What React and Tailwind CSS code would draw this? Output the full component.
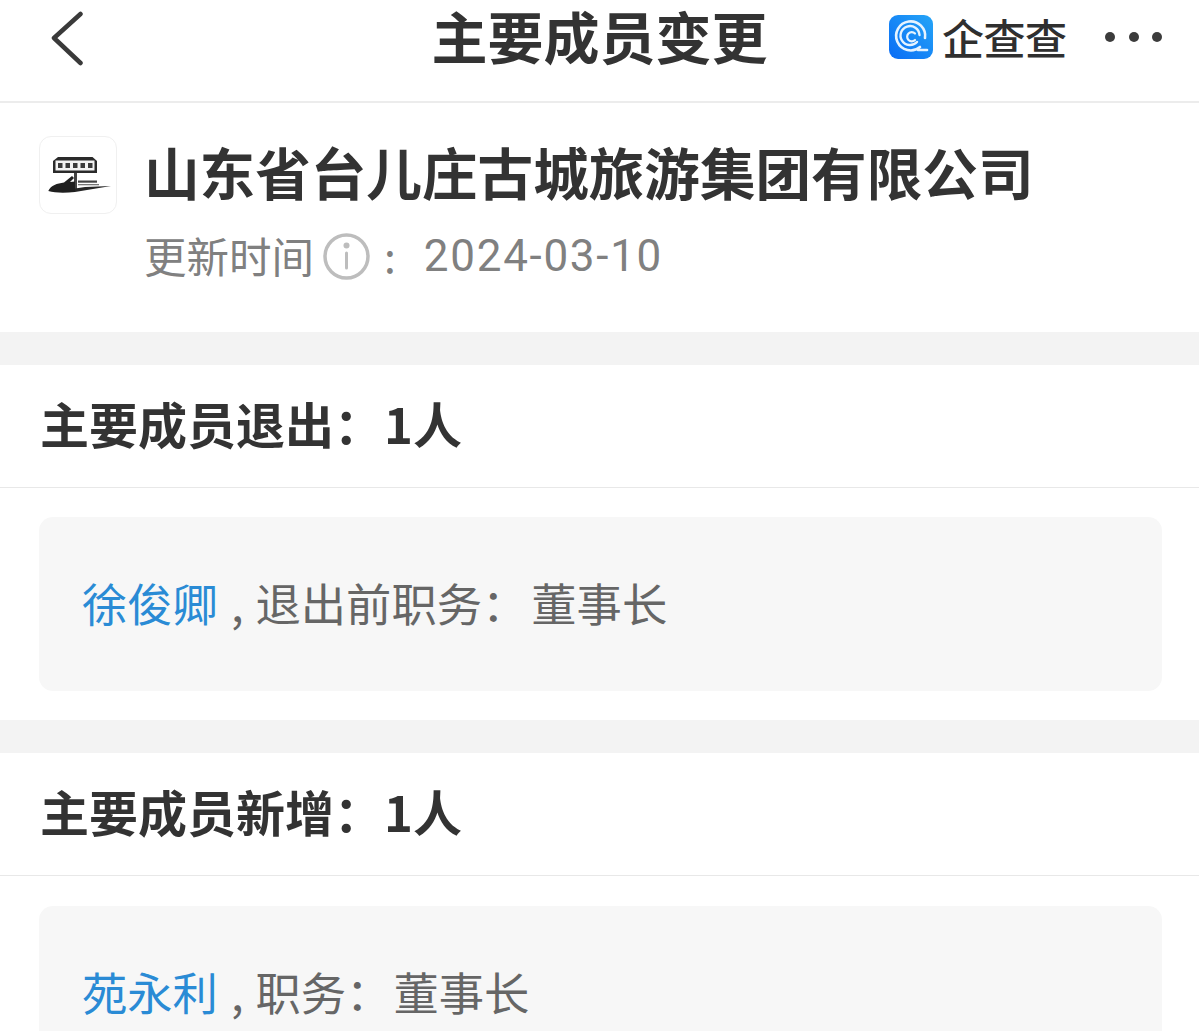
const font = { fontFamily: '"Noto Sans CJK SC", "Noto Sans", sans-serif' };
const latin = { fontFamily: 'Roboto, "Noto Sans CJK SC", sans-serif' };

function Section({ title, name, label, value, gap, last }) {
  return (
    <section className="bg-white">
      <div className="h-[123px] flex items-center px-[40px] pb-[7px] border-b border-[#e8e8e8]">
        <h2 className="text-[49px] font-bold text-[#333333] leading-[70px] whitespace-nowrap">
          {title}：<span className="ml-[1px]">1人</span>
        </h2>
      </div>
      <div className={last ? "pt-[30px] px-[37px] pl-[39px]" : "pt-[29px] pb-[29px] px-[37px] pl-[39px]"}>
        <div className="h-[174px] bg-[#f7f7f7] rounded-[14px] px-[43px] pb-[5px] flex items-center text-[45.3px] leading-[60px] text-[#666666] whitespace-nowrap">
          <span className="text-[#2a8bd5]">{name}</span>
          <span className="ml-[13px]">,</span>
          <span className="ml-[12px]">{label}：</span>
          <span style={{ marginLeft: gap }}>{value}</span>
        </div>
      </div>
    </section>
  );
}

export default function App() {
  return (
    <div style={font} className="h-[1031px] w-[1199px] overflow-hidden bg-[#f3f3f3]">
      <header className="relative h-[103px] pb-[32px] bg-white border-b-2 border-[#ececec] flex items-center justify-center">
        <svg className="absolute left-[50px] top-[11px]" width="36" height="56" viewBox="0 0 36 56" fill="none">
          <path d="M30.5 3 L4 27 L30.5 52" stroke="#3a3a3a" strokeWidth="4.5" strokeLinecap="round" strokeLinejoin="round" />
        </svg>
        <h1 className="text-[56px] font-bold text-[#333333] leading-[69px] whitespace-nowrap">主要成员变更</h1>
        <div className="absolute left-[889px] top-[15px] flex items-center">
          <svg width="44" height="44" viewBox="0 0 44 44">
            <defs>
              <linearGradient id="q" x1="0" y1="1" x2="1" y2="0">
                <stop offset="0" stopColor="#0a6cf5" />
                <stop offset="1" stopColor="#25a5f7" />
              </linearGradient>
            </defs>
            <rect width="44" height="44" rx="9" fill="url(#q)" />
            <g fill="none" stroke="#e6f3ff" strokeLinecap="round">
              <path d="M31 32 A14.5 14.5 0 1 1 36 23" strokeWidth="2.6" />
              <path d="M28 27 A9.5 9.5 0 1 1 30.5 20" strokeWidth="2.4" />
              <path d="M26 25 A4.6 4.6 0 1 1 26 18.5" strokeWidth="2.2" />
              <path d="M29 35 H38" strokeWidth="2.6" />
            </g>
          </svg>
          <span className="ml-[9px] text-[42px] leading-[44px] font-medium tracking-[-0.5px] text-[#2f2f2f] whitespace-nowrap">企查查</span>
        </div>
        <div className="absolute left-[1105px] top-[32px] flex gap-[13.5px]">
          <span className="w-[10px] h-[10px] rounded-full bg-[#3c3c3c]" />
          <span className="w-[10px] h-[10px] rounded-full bg-[#3c3c3c]" />
          <span className="w-[10px] h-[10px] rounded-full bg-[#3c3c3c]" />
        </div>
      </header>

      <section className="h-[229px] bg-white px-[39px] pt-[33px] flex items-start">
        <div className="w-[78px] h-[78px] shrink-0 rounded-[12px] border border-[#f0f0f0] bg-white">
          <svg width="76" height="76" viewBox="1 1 76 76">
            <path d="M14 25 L19 21 H53.5 L58 25 V37 H14 Z" fill="#2a2a2a" />
            <rect x="16.5" y="24.5" width="39" height="10" fill="#f2f2f2" />
            <g fill="#3a3a3a">
              <rect x="19" y="27" width="4.5" height="5" />
              <rect x="26.5" y="27" width="4.5" height="5" />
              <rect x="34" y="27" width="4.5" height="5" />
              <rect x="41.5" y="27" width="4.5" height="5" />
              <rect x="49" y="27" width="4.5" height="5" />
            </g>
            <rect x="35" y="37" width="3" height="17" fill="#444" />
            <path d="M9.3 55 C12 49 18 47.5 25 46.5 L33 40 L35 42 L31 46 L36 45.5 V56 C26 57 16 57 9.3 55 Z" fill="#1f1f1f" />
            <path d="M36 56 L72 50 L46 51 L36 52.5 Z" fill="#262626" />
            <rect x="39" y="44.5" width="19" height="2.2" fill="#444" />
            <rect x="39" y="48" width="21" height="1.3" fill="#777" />
          </svg>
        </div>
        <div className="ml-[27px] -mt-[3px]">
          <div className="text-[55.6px] font-bold text-[#333333] leading-[76px] whitespace-nowrap">山东省台儿庄古城旅游集团有限公司</div>
          <div className="mt-[16px] flex items-center text-[42.5px] leading-[56px] text-[#808080] whitespace-nowrap">
            <span>更新时间</span>
            <svg className="ml-[9px] mt-[4px]" width="47" height="47" viewBox="0 0 47 47" fill="none">
              <circle cx="23.5" cy="23.5" r="21.5" stroke="#bdbdbd" strokeWidth="3.5" />
              <circle cx="23.5" cy="12.5" r="3" fill="#bdbdbd" />
              <path d="M23.5 20 V35" stroke="#bdbdbd" strokeWidth="3" strokeLinecap="round" />
            </svg>
            <span className="ml-[14px]">:</span>
            <span style={latin} className="ml-[28px] mt-[3px] text-[44px] tracking-[1.7px]">2024-03-10</span>
          </div>
        </div>
      </section>

      <div className="mt-[33px]">
        <Section title="主要成员退出" name="徐俊卿" label="退出前职务" value="董事长" gap="4px" />
      </div>
      <div className="mt-[33px]">
        <Section title="主要成员新增" name="苑永利" label="职务" value="董事长" gap="2px" last />
      </div>
    </div>
  );
}
